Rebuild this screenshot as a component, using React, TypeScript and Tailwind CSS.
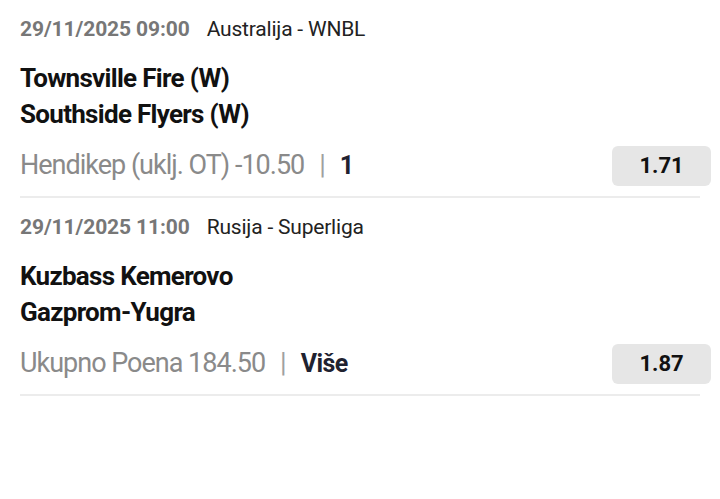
import React from 'react';

type Bet = {
  date: string;
  league: string;
  home: string;
  away: string;
  market: string;
  pick: string;
  odd: string;
};

const bets: Bet[] = [
  {
    date: '29/11/2025 09:00',
    league: 'Australija - WNBL',
    home: 'Townsville Fire (W)',
    away: 'Southside Flyers (W)',
    market: 'Hendikep (uklj. OT) -10.50',
    pick: '1',
    odd: '1.71',
  },
  {
    date: '29/11/2025 11:00',
    league: 'Rusija - Superliga',
    home: 'Kuzbass Kemerovo',
    away: 'Gazprom-Yugra',
    market: 'Ukupno Poena 184.50',
    pick: 'Više',
    odd: '1.87',
  },
];

const BetRow = ({ bet }: { bet: Bet }) => (
  <div className="pt-[15px] pb-[10px] border-b-2 border-[#ececec]">
    {/* Date + league */}
    <div className="flex items-baseline text-[21px] leading-[28px]">
      <span className="font-bold text-[#777777] tracking-[-0.1px]">{bet.date}</span>
      <span className="ml-[17px] text-[#222222] tracking-[-0.2px]">{bet.league}</span>
    </div>

    {/* Teams */}
    <div className="mt-[17px] text-[26px] leading-[36px] font-bold text-[#111111] tracking-[-0.7px]">
      <div>{bet.home}</div>
      <div>{bet.away}</div>
    </div>

    {/* Market + odd */}
    <div className="mt-[13px] flex items-center justify-between">
      <div className="flex items-baseline text-[27px] leading-[40px] tracking-[-1px]">
        <span className="text-[#8a8a8a]">{bet.market}</span>
        <span className="mx-[15px] text-[#a0a0a0]">|</span>
        <span className="font-bold text-[25px] tracking-[-0.6px] text-[#1f2230]">{bet.pick}</span>
      </div>
      <div className="w-[99px] h-[40px] mr-[-11px] rounded-md bg-[#e6e6e6] flex items-center justify-center text-[22px] font-bold text-[#111111]">
        {bet.odd}
      </div>
    </div>
  </div>
);

export default function App() {
  return (
    <div className="min-h-screen bg-white font-['Roboto',sans-serif]">
      <div className="pl-[20px] pr-[20px]">
        {bets.map((b) => (
          <BetRow key={b.date} bet={b} />
        ))}
      </div>
    </div>
  );
}
